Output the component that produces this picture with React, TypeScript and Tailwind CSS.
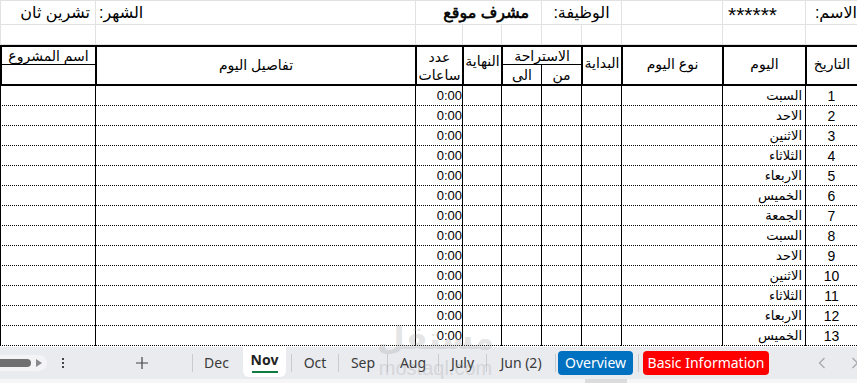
import React from 'react';

const days = ['السبت', 'الاحد', 'الاثنين', 'الثلاثاء', 'الاربعاء', 'الخميس', 'الجمعة', 'السبت', 'الاحد', 'الاثنين', 'الثلاثاء', 'الاربعاء', 'الخميس'];

// right-to-left column widths: التاريخ → اسم المشروع
const cols = 'grid grid-cols-[52px_83px_101px_40px_40px_40px_39px_47px_320px_95px]';
const grid = 'border-l border-b border-[#e2e2e2] overflow-hidden whitespace-nowrap';
const body = 'border-l border-b border-black [border-bottom-style:dotted] overflow-hidden whitespace-nowrap';
const head = 'border-l-2 border-black flex items-center justify-center text-[14px] leading-none';

const Divider = () => <div className="w-px h-[18px] bg-[#c8cbd0] shrink-0" />;

const Tab = ({ w, children }: { w: string; children: React.ReactNode }) => (
  <div className={`${w} shrink-0 text-center text-[14px] text-[#3a3a3a]`}>{children}</div>
);

const App: React.FC = () => {
  return (
    <div className="relative w-[857px] h-[383px] overflow-hidden bg-white flex flex-col text-black font-['Liberation_Sans','DejaVu_Sans',sans-serif]">
      <div dir="rtl" className="h-[347px] overflow-hidden shrink-0">
        {/* info row */}
        <div className={`${cols} h-[25px] border-t border-[#e2e2e2] text-[16px] leading-none`}>
          <div className={`${grid} flex items-center justify-start pr-0`}>الاسم:</div>
          <div className={`${grid} flex items-start justify-end pl-[5px] pt-[3px] text-[21px]`}>******</div>
          <div className={grid} />
          <div className={`${grid} col-span-2 flex items-center justify-center`}>الوظيفة:</div>
          <div className={`${grid} col-span-3 flex items-center justify-start pr-[12px] text-[16px] [-webkit-text-stroke:0.6px_black]`}>مشرف موقع</div>
          <div className={`${grid} flex items-center justify-end pl-[3px]`}>الشهر:</div>
          <div className={`${grid} flex items-center justify-start pr-[5px]`}>تشرين ثان</div>
        </div>
        {/* empty row */}
        <div className={`${cols} h-[20px]`}>
          {Array.from({ length: 10 }).map((_, i) => (
            <div key={i} className={grid} />
          ))}
        </div>
        {/* table header */}
        <div className={`${cols} grid-rows-[18px_19px] h-[41px] border-y-2 border-black`}>
          <div className={`${head} row-span-2 pb-[4px]`}>التاريخ</div>
          <div className={`${head} row-span-2 pb-[4px]`}>اليوم</div>
          <div className={`${head} row-span-2 pb-[4px]`}>نوع اليوم</div>
          <div className={`${head} row-span-2 pb-[6px]`}>البداية</div>
          <div className={`${head} col-span-2 border-b border-b-black`}>الاستراحة</div>
          <div className={`${head} row-span-2 pb-[10px]`}>النهاية</div>
          <div className={`${head} row-span-2 flex-col gap-[4px]`}>
            <span>عدد</span>
            <span>ساعات</span>
          </div>
          <div className={`${head} row-span-2 pb-[2px]`}>تفاصيل اليوم</div>
          <div className={`${head} border-b border-b-black text-[13px]`}>اسم المشروع</div>
          <div className="border-l border-black flex items-center justify-center text-[14px] leading-none">من</div>
          <div className={head}>الى</div>
          <div className="border-l-2 border-black" />
        </div>
        {/* day rows */}
        {days.map((d, i) => (
          <div key={i} className={`${cols} h-[20px] leading-none`}>
            <div className={`${body} flex items-center justify-center text-[14px]`}>{i + 1}</div>
            <div className={`${body} flex items-center justify-start pr-[3px] text-[13px]`}>{d}</div>
            <div className={body} />
            <div className={body} />
            <div className={body} />
            <div className={body} />
            <div className={body} />
            <div className={`${body} flex items-center justify-end pl-[3px] text-[13px]`} dir="ltr">0:00</div>
            <div className={body} />
            <div className={body} />
          </div>
        ))}
      </div>

      {/* sheet tabs */}
      <div className="h-[32px] shrink-0 bg-[#e9ebef] flex items-center font-['Noto_Sans','Open_Sans',sans-serif] leading-none">
        <div className="w-[192px] shrink-0 flex items-center">
          <div className="w-[47px] h-[16px] rounded-r-full bg-[#f4f4f6] flex items-center">
            <div className="w-[31px] h-[8px] rounded-r-full bg-[#707070]" />
            <div className="ml-[5px] w-0 h-0 border-y-[4px] border-y-transparent border-l-[6px] border-l-[#8a8a8a]" />
          </div>
          <div className="ml-[15px] flex flex-col gap-[2px]">
            <span className="w-[2px] h-[2px] bg-[#444]" />
            <span className="w-[2px] h-[2px] bg-[#444]" />
            <span className="w-[2px] h-[2px] bg-[#444]" />
          </div>
          <svg className="ml-[72px]" width="12" height="12" viewBox="0 0 12 12">
            <path d="M6 0v12M0 6h12" stroke="#444" strokeWidth="1.2" />
          </svg>
        </div>
        <Divider />
        <Tab w="w-[47px]">Dec</Tab>
        <div className="w-[3px] shrink-0" />
        <div className="w-[43px] h-[30px] self-start shrink-0 bg-white rounded-b-[6px] flex flex-col items-center justify-center">
          <span className="text-[14px] font-bold text-[#222] mt-[2px]">Nov</span>
          <span className="mt-[4px] w-[26px] h-[2.5px] bg-[#107c41]" />
        </div>
        <div className="w-[5px] shrink-0" />
        <Divider />
        <Tab w="w-[46px]">Oct</Tab>
        <Divider />
        <Tab w="w-[48px]">Sep</Tab>
        <Divider />
        <Tab w="w-[50px]">Aug</Tab>
        <Divider />
        <Tab w="w-[47px]">July</Tab>
        <Divider />
        <Tab w="w-[68px]">Jun (2)</Tab>
        <Divider />
        <div className="w-[2px] shrink-0" />
        <div className="w-[75px] h-[24px] shrink-0 rounded-[4px] bg-[#0070c0] text-white text-[14px] flex items-center justify-center">
          Overview
        </div>
        <div className="w-[5px] shrink-0" />
        <Divider />
        <div className="w-[4px] shrink-0" />
        <div className="w-[126px] h-[24px] shrink-0 rounded-[4px] bg-[#ff0000] text-white text-[14px] flex items-center justify-center">
          Basic Information
        </div>
        <div className="flex-1" />
        <svg width="8" height="12" viewBox="0 0 8 12" className="mr-[25px]">
          <path d="M6.5 1L1.5 6l5 5" fill="none" stroke="#a8abb0" strokeWidth="1.3" />
        </svg>
        <svg width="8" height="12" viewBox="0 0 8 12" className="mr-[-2px]">
          <path d="M1.5 1l5 5-5 5" fill="none" stroke="#a8abb0" strokeWidth="1.3" />
        </svg>
      </div>
      <div className="h-[4px] shrink-0 bg-[#f6f6f6] flex">
        <div className="ml-[585px] w-[42px] h-full bg-[#dcdcdc]" />
      </div>

      {/* watermark */}
      <div className="absolute left-[377px] top-[322px] flex flex-col items-center text-[#9a9a9a] opacity-25 pointer-events-none leading-none">
        <span className="text-[32px] font-bold font-['DejaVu_Sans',sans-serif]">مستقل</span>
        <span className="text-[20px] font-['Liberation_Sans',sans-serif] mt-[4px]">mostaql.com</span>
      </div>
    </div>
  );
};

export default App;
